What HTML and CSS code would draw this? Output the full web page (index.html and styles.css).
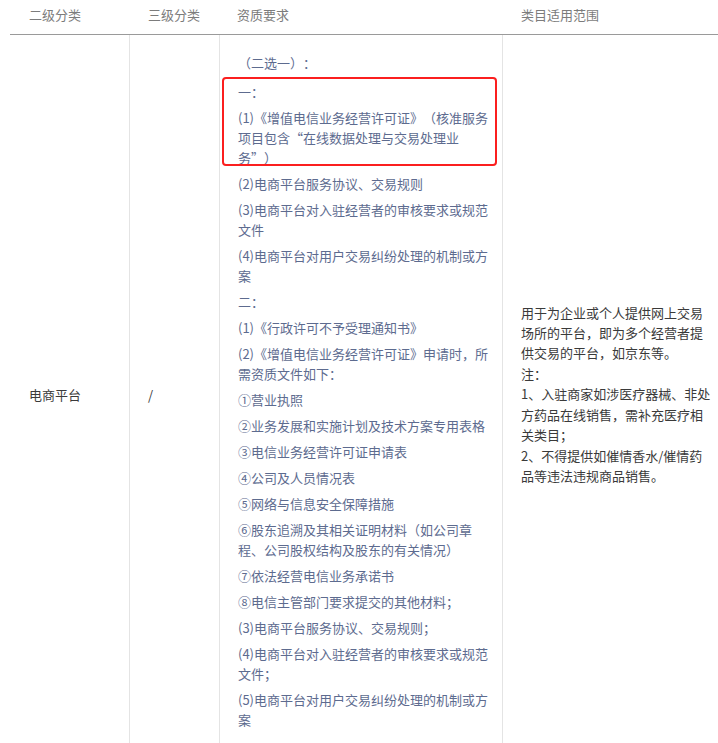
FILE: index.html
```html
<!DOCTYPE html>
<html lang="zh-CN">
<head>
<meta charset="utf-8">
<title>类目资质</title>
<link rel="stylesheet" href="styles.css">
</head>
<body>
<div class="table">
  <div class="thead">
    <div class="th">二级分类</div>
    <div class="th">三级分类</div>
    <div class="th th-req">资质要求</div>
    <div class="th th-scope">类目适用范围</div>
  </div>
  <div class="row">
    <div class="cell c1 mid">电商平台</div>
    <div class="cell c2 mid">/</div>
    <div class="cell c3">
      <p>（二选一）：</p>
      <div class="hl">
        <p>一：</p>
        <p>(1)《增值电信业务经营许可证》（核准服务项目包含<span class="fw">“</span>在线数据处理与交易处理业务<span class="fw">”</span>）</p>
      </div>
      <p>(2)电商平台服务协议、交易规则</p>
      <p>(3)电商平台对入驻经营者的审核要求或规范文件</p>
      <p>(4)电商平台对用户交易纠纷处理的机制或方案</p>
      <p>二：</p>
      <p>(1)《行政许可不予受理通知书》</p>
      <p>(2)《增值电信业务经营许可证》申请时，所需资质文件如下：</p>
      <p>①营业执照</p>
      <p>②业务发展和实施计划及技术方案专用表格</p>
      <p>③电信业务经营许可证申请表</p>
      <p>④公司及人员情况表</p>
      <p>⑤网络与信息安全保障措施</p>
      <p>⑥股东追溯及其相关证明材料（如公司章程、公司股权结构及股东的有关情况）</p>
      <p>⑦依法经营电信业务承诺书</p>
      <p>⑧电信主管部门要求提交的其他材料；</p>
      <p>(3)电商平台服务协议、交易规则；</p>
      <p>(4)电商平台对入驻经营者的审核要求或规范文件；</p>
      <p>(5)电商平台对用户交易纠纷处理的机制或方案</p>
    </div>
    <div class="cell c4 mid">
      <div class="scope">用于为企业或个人提供网上交易场所的平台，即为多个经营者提供交易的平台，如京东等。<br>注：<br>1、入驻商家如涉医疗器械、非处方药品在线销售，需补充医疗相关类目；<br>2、不得提供如催情香水/催情药品等违法违规商品销售。</div>
    </div>
  </div>
</div>
</body>
</html>
```

FILE: styles.css
```css
html, body {
  margin: 0;
  padding: 0;
  background: #fff;
  overflow: hidden;
}

body {
  font-family: "Noto Sans CJK SC", "Noto Sans", sans-serif;
  font-size: 13px;
  color: #333;
  text-spacing-trim: space-all;
}

.table {
  margin-left: 10px;
  width: 708px;
}

.thead,
.row {
  display: grid;
  grid-template-columns: 119px 90px 283px 216px;
}

.thead {
  border-bottom: 1px solid #9a9a9a;
}

.th {
  padding: 5px 0 9px 19px;
  line-height: 20px;
  color: #7c7c7c;
}

.th-req {
  padding-left: 18px;
}

.cell {
  line-height: 20px;
}

.mid {
  display: flex;
  align-items: center;
}

.c1 {
  padding: 0 19px;
  color: #3a3a3a;
}

.c2 {
  border-left: 1px solid #e4e4e4;
  padding-left: 18px;
  color: #3a3a3a;
}

.c3 {
  border-left: 1px solid #e4e4e4;
  padding: 18px 13px 18px 18px;
  color: #5d6b8f;
}

.c3 p {
  margin: 0 0 6px;
}

.fw {
  font-feature-settings: "fwid";
}

.hl {
  position: relative;
  margin-top: 9px;
}

.hl::before {
  content: "";
  position: absolute;
  left: -16px;
  right: -8px;
  top: -5px;
  bottom: 2px;
  border: 2.5px solid #fb1f1f;
  border-radius: 4px;
}

.c4 {
  border-left: 1px solid #e4e4e4;
  padding: 0 6px 0 18px;
  color: #3a3a3a;
}

.scope {
  line-height: 20.4px;
}
```
